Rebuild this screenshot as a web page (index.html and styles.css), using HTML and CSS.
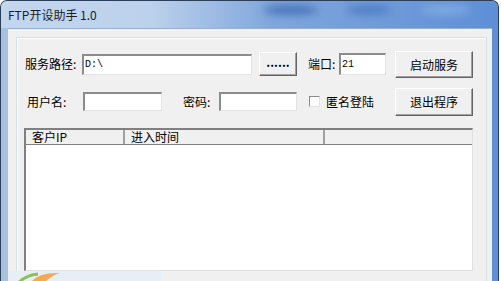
FILE: index.html
```html
<!DOCTYPE html>
<html>
<head>
  <title>FTP开设助手 1.0</title>
  <link rel="stylesheet" href="styles.css">
</head>
<body>
  <div class="window">
    <div class="titlebar">
      <span class="title">FTP开设助手 1.0</span>
      <span class="blob b1"></span>
      <span class="blob b2"></span>
      <span class="blob b3"></span>
    </div>
    <div class="frame">
      <div class="client">
        <div class="group">
          <div class="row row1">
            <span class="label lbl-path">服务路径:</span>
            <div class="input in-path">D:\</div>
            <div class="btn btn-browse">......</div>
            <span class="label lbl-port">端口:</span>
            <div class="input in-port">21</div>
            <div class="btn btn-main">启动服务</div>
          </div>
          <div class="row row2">
            <span class="label lbl-user">用户名:</span>
            <div class="input in-user"></div>
            <span class="label lbl-pass">密码:</span>
            <div class="input in-pass"></div>
            <div class="check"></div>
            <span class="label lbl-anon">匿名登陆</span>
            <div class="btn btn-main btn-exit">退出程序</div>
          </div>
          <div class="list">
            <div class="list-head">
              <div class="col c1">客户IP</div>
              <div class="col c2">进入时间</div>
              <div class="col c3"></div>
            </div>
            <div class="list-body"></div>
          </div>
        </div>
      </div>
    </div>
    <div class="behind">
      <svg width="60" height="12" viewBox="0 0 60 12">
        <path d="M10 12 Q 18 4 30 3" stroke="#8cc050" stroke-width="3" fill="none"/>
        <path d="M22 12 Q 30 1 52 2 Q 44 4 36 12 Z" fill="#f3a955"/>
      </svg>
    </div>
  </div>
</body>
</html>
```

FILE: styles.css
```css
body {
  margin: 0;
  font-family: "Noto Sans CJK SC", "Liberation Sans", sans-serif;
  font-size: 12px;
  color: #000;
}

.window {
  position: relative;
  width: 497px;
  height: 281px;
  overflow: hidden;
  border: 1px solid #2b3f5a;
  border-bottom: none;
  border-radius: 7px 7px 0 0;
  background: linear-gradient(to right, #a9c0dc 0%, #b9cde6 30%, #7ea4d6 70%, #5d8fd4 100%);
}

.titlebar {
  position: relative;
  height: 27px;
  display: flex;
  align-items: center;
  padding-left: 7px;
  background: linear-gradient(to right, #c3d6ee 0%, #bcd1ec 30%, #7fa6dc 55%, #5e8fd6 100%);
}

.title {
  position: relative;
  z-index: 2;
  font-size: 12px;
  color: #1d1d1d;
  line-height: 16px;
  margin-top: 1px;
}

.blob {
  position: absolute;
  border-radius: 50%;
  filter: blur(4px);
}

.b1 {
  left: 262px;
  top: 5px;
  width: 55px;
  height: 8px;
  background: #3d6bb3;
}

.b2 {
  left: 345px;
  top: 5px;
  width: 45px;
  height: 8px;
  background: #4a78c0;
}

.b3 {
  left: 420px;
  top: 5px;
  width: 50px;
  height: 8px;
  background: #86aee4;
}

.frame {
  display: flex;
  padding: 0 6px 0 7px;
}

.client {
  width: 485px;
  height: 254px;
  background: #f0f0f0;
  border-top: 1px solid #9ab0c9;
  padding: 8px 0 0 8px;
}

.group {
  width: 455px;
  height: 250px;
  border: 1px solid #d5dfe5;
  box-shadow: inset 1px 1px 0 #fff;
  padding: 12px 7px 0 7px;
}

.row {
  display: flex;
  align-items: center;
  width: 449px;
}

.row1 {
  height: 28px;
}

.row2 {
  height: 29px;
  margin-top: 9px;
}

.label {
  white-space: nowrap;
  line-height: 16px;
}

.lbl-path {
  width: 57px;
  padding-left: 1px;
}

.lbl-port {
  width: 31px;
  margin-left: 11px;
}

.lbl-user {
  width: 56px;
  padding-left: 3px;
}

.lbl-pass {
  width: 36px;
  padding-left: 21px;
}

.lbl-anon {
  margin-left: 6px;
}

.input {
  box-sizing: border-box;
  background: #fff;
  border-top: 2px solid #8c8c8c;
  border-left: 2px solid #8c8c8c;
  border-bottom: 1px solid #e3e3e3;
  border-right: 1px solid #e3e3e3;
  font-family: "Liberation Mono", monospace;
  font-size: 10px;
  line-height: 14px;
  padding-left: 1px;
  display: flex;
  align-items: center;
}

.in-path {
  width: 170px;
  height: 21px;
}

.in-port {
  width: 47px;
  height: 22px;
}

.in-user {
  width: 79px;
  height: 19px;
}

.in-pass {
  width: 78px;
  height: 19px;
}

.btn {
  box-sizing: border-box;
  background: #f0f0f0;
  border-top: 1px solid #fff;
  border-left: 1px solid #fff;
  border-bottom: 1px solid #646464;
  border-right: 1px solid #646464;
  box-shadow: inset -1px -1px 0 #a0a0a0;
  display: flex;
  align-items: center;
  justify-content: center;
}

.btn-browse {
  width: 38px;
  height: 24px;
  margin-left: 7px;
  font-weight: bold;
  padding-bottom: 5px;
  letter-spacing: 0;
}

.btn-main {
  width: 78px;
  height: 27px;
  margin-left: 9px;
}

.btn-exit {
  margin-left: auto;
  height: 28px;
}

.check {
  box-sizing: border-box;
  width: 11px;
  height: 11px;
  margin-left: 12px;
  background: #fff;
  border-top: 1px solid #8c8c8c;
  border-left: 1px solid #8c8c8c;
  border-bottom: 1px solid #e3e3e3;
  border-right: 1px solid #e3e3e3;
}

.list {
  box-sizing: border-box;
  width: 449px;
  height: 143px;
  margin-top: 12px;
  background: #fff;
  border-top: 2px solid #808080;
  border-left: 2px solid #808080;
  border-bottom: 1px solid #e0e0e0;
  border-right: 1px solid #e0e0e0;
}

.list-head {
  display: flex;
  height: 14px;
  background: #f0f0f0;
  border-bottom: 1px solid #808080;
}

.col {
  box-sizing: border-box;
  line-height: 14px;
  padding-left: 6px;
  border-right: 2px solid #a0a0a0;
}

.c1 {
  width: 99px;
}

.c2 {
  width: 200px;
}

.c3 {
  flex: 1;
  border-right: none;
}

.behind {
  position: absolute;
  left: 7px;
  top: 270px;
  width: 153px;
  height: 11px;
  background: #e7eef6;
}

.behind svg {
  display: block;
}
```
